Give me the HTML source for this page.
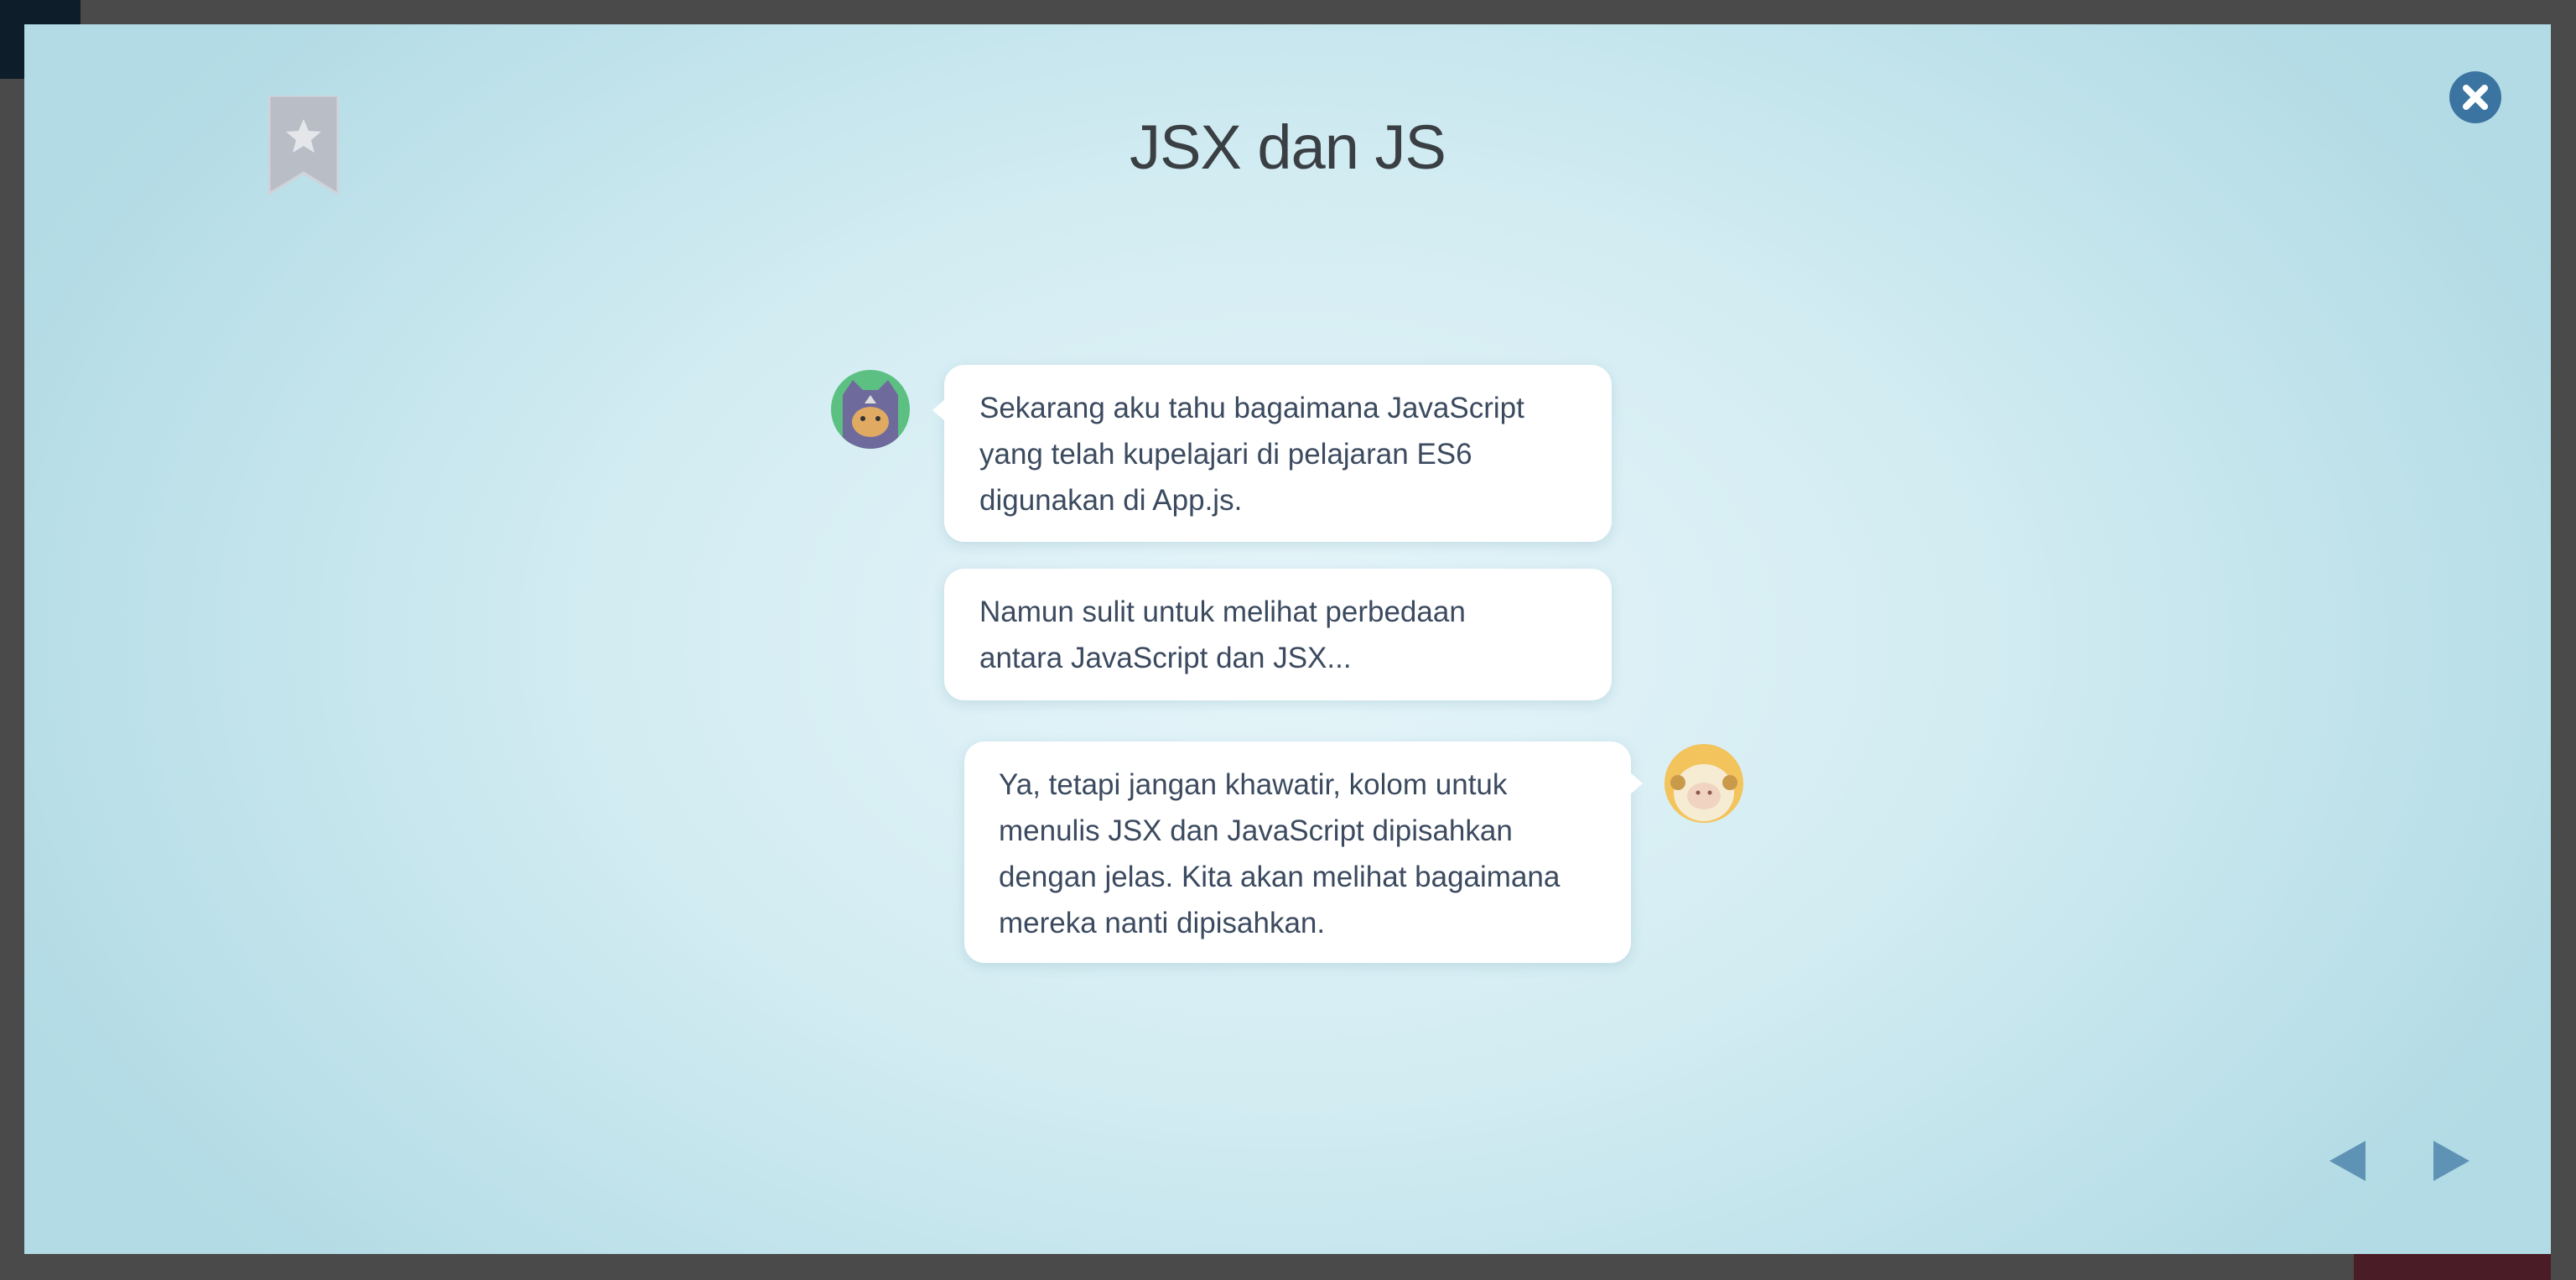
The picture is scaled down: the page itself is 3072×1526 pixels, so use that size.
<!DOCTYPE html>
<html><head><meta charset="utf-8"><style>
html,body{margin:0;padding:0;width:3072px;height:1526px;overflow:hidden;background:#4a4a4a;font-family:"Liberation Sans",sans-serif}
.tl{position:absolute;left:0;top:0;width:96px;height:94px;background:#0d1e2a}
.br{position:absolute;left:2807px;top:1440px;width:235px;height:86px;background:#4a1c26}
.modal{position:absolute;left:29px;top:29px;width:3013px;height:1466px;
background:radial-gradient(ellipse 55% 75% at 50% 50%,#e6f5fa 0%,#d2ecf2 50%,#b2dbe5 100%)}
.title{position:absolute;left:0;width:100%;top:104px;text-align:center;font-size:74px;color:#3a3f44;font-weight:300;letter-spacing:-1px}
.bubble{position:absolute;background:#fff;border-radius:24px;box-shadow:0 4px 14px rgba(80,130,150,.18);color:#3b4a5f;font-size:35px;line-height:55px;box-sizing:border-box}
.av{position:absolute;width:94px;height:94px;border-radius:50%;overflow:hidden}
</style></head><body>
<div class="tl"></div>
<div class="br"></div>
<div class="modal">
  <svg style="position:absolute;left:290px;top:85px" width="86" height="118" viewBox="0 0 86 118">
    <path d="M2 0H84V117L43 92L2 117Z" fill="#b9bdc6" stroke="#d0d3da" stroke-width="3"/>
    <path d="M43 28L49 42L64 43L52 53L56 68L43 60L30 68L34 53L22 43L37 42Z" fill="#e4e6ea"/>
  </svg>
  <div class="title">JSX dan JS</div>
  <svg style="position:absolute;left:2892px;top:56px" width="62" height="62" viewBox="0 0 62 62">
    <circle cx="31" cy="31" r="31" fill="#3b74a0"/>
    <path d="M20 20L42 42M42 20L20 42" stroke="#fff" stroke-width="8" stroke-linecap="round"/>
  </svg>

  <div class="av" style="left:962px;top:412px">
    <svg width="94" height="94" viewBox="0 0 94 94"><rect width="94" height="94" fill="#5cc083"/>
    <path d="M14 94V30L26 12L38 24H56L68 12L80 30V94Z" fill="#6f6a9c"/>
    <ellipse cx="47" cy="62" rx="22" ry="18" fill="#e0aa62"/>
    <circle cx="38" cy="58" r="3" fill="#333"/><circle cx="56" cy="58" r="3" fill="#333"/>
    <path d="M40 40L47 30L54 40Z" fill="#ddd"/></svg>
  </div>
  <div class="bubble" style="left:1097px;top:406px;width:796px;height:211px;padding:24px 0 0 42px">
    <div style="position:absolute;left:-14px;top:40px;width:0;height:0;border-top:14px solid transparent;border-bottom:14px solid transparent;border-right:16px solid #fff"></div>
    Sekarang aku tahu bagaimana JavaScript<br>yang telah kupelajari di pelajaran ES6<br>digunakan di App.js.
  </div>
  <div class="bubble" style="left:1097px;top:649px;width:796px;height:157px;padding:24px 0 0 42px">
    Namun sulit untuk melihat perbedaan<br>antara JavaScript dan JSX...
  </div>
  <div class="bubble" style="left:1121px;top:855px;width:795px;height:264px;padding:24px 0 0 41px">
    <div style="position:absolute;right:-14px;top:36px;width:0;height:0;border-top:14px solid transparent;border-bottom:14px solid transparent;border-left:16px solid #fff"></div>
    Ya, tetapi jangan khawatir, kolom untuk<br>menulis JSX dan JavaScript dipisahkan<br>dengan jelas. Kita akan melihat bagaimana<br>mereka nanti dipisahkan.
  </div>
  <div class="av" style="left:1956px;top:858px">
    <svg width="94" height="94" viewBox="0 0 94 94"><rect width="94" height="94" fill="#f3c35c"/>
    <ellipse cx="47" cy="58" rx="36" ry="34" fill="#f6ecd4"/>
    <ellipse cx="47" cy="62" rx="20" ry="16" fill="#f0d3c0"/>
    <circle cx="16" cy="46" r="9" fill="#c99a4a"/><circle cx="78" cy="46" r="9" fill="#c99a4a"/>
    <circle cx="40" cy="58" r="2.5" fill="#8a5a4a"/><circle cx="54" cy="58" r="2.5" fill="#8a5a4a"/></svg>
  </div>

  <svg style="position:absolute;left:2749px;top:1331px" width="44" height="48" viewBox="0 0 44 48"><path d="M43 0V48L0 24Z" fill="#5f93b5"/></svg>
  <svg style="position:absolute;left:2872px;top:1331px" width="44" height="48" viewBox="0 0 44 48"><path d="M1 0V48L44 24Z" fill="#5f93b5"/></svg>
</div>
</body></html>
